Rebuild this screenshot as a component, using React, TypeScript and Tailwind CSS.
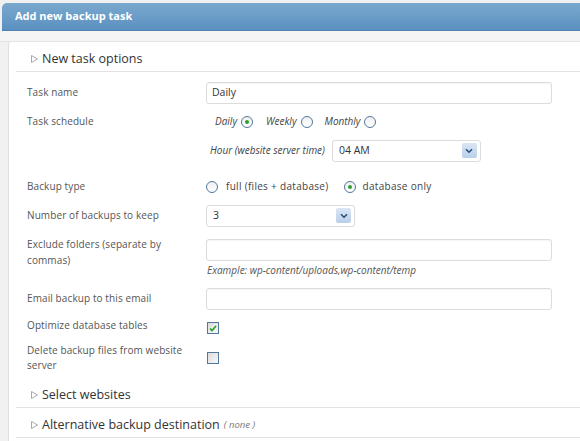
import type { ReactNode } from 'react';

const font = { fontFamily: '"Open Sans", "DejaVu Sans", sans-serif' };

function Triangle() {
    return (
        <svg width="7" height="8" viewBox="0 0 7 8" className="mr-[4px] shrink-0">
            <path d="M0.5 0.5 L6.5 4 L0.5 7.5 Z" fill="none" stroke="#a8a8a8" strokeWidth="1" />
        </svg>
    );
}

function Radio({ checked }: { checked?: boolean }) {
    return (
        <span className="inline-flex size-[12px] shrink-0 items-center justify-center rounded-full border border-[#52779c] bg-gradient-to-b from-[#f0f0f0] to-white">
            {checked && <span className="size-[4px] rounded-full bg-[#2ea02e]" />}
        </span>
    );
}

function Checkbox({ checked }: { checked?: boolean }) {
    return (
        <span className="inline-flex size-[12px] shrink-0 items-center justify-center border border-[#52779c] bg-gradient-to-br from-[#dcdcdc] to-[#f8f8f8]">
            {checked && (
                <svg width="8" height="7" viewBox="0 0 8 7">
                    <path d="M1 3.5 L3 5.5 L7 1" fill="none" stroke="#21a121" strokeWidth="1.6" />
                </svg>
            )}
        </span>
    );
}

function TextBox({ value, width }: { value?: string; width: string }) {
    return (
        <div
            className={`${width} flex h-[22px] items-center rounded-[3px] border border-[#dcdcdc] bg-white px-[5px] text-[10.5px] text-[#333] shadow-[inset_0_1px_1px_rgba(0,0,0,0.04)]`}
        >
            {value}
        </div>
    );
}

function SelectBox({ value, width }: { value: string; width: string }) {
    return (
        <div
            className={`${width} flex h-[22px] items-center justify-between rounded-[3px] border border-[#dcdcdc] bg-white pr-[3px] pl-[6px] text-[10.5px] text-[#333]`}
        >
            <span>{value}</span>
            <span className="flex size-[15px] items-center justify-center rounded-[2px] bg-gradient-to-b from-[#dbe6f4] to-[#b9cfe9]">
                <svg width="8" height="6" viewBox="0 0 8 6">
                    <path d="M1 1.2 L4 4.2 L7 1.2" fill="none" stroke="#2b4d7a" strokeWidth="1.6" />
                </svg>
            </span>
        </div>
    );
}

function Row({ label, height, children, top }: { label: ReactNode; height: string; children?: ReactNode; top: string }) {
    return (
        <div className={`${top} ${height} flex items-center`}>
            <div className="w-[179px] shrink-0 text-[10px] leading-[15px] tracking-[0.1px] text-[#555]">{label}</div>
            <div className="flex flex-1 items-center">{children}</div>
        </div>
    );
}

function Section({ title, extra }: { title: string; extra?: ReactNode }) {
    return (
        <div className="flex h-[30px] items-center border-b border-[#e2e2e2] pt-[5px] pl-[15px] text-[12.5px] text-[#333]">
            <Triangle />
            <span>{title}</span>
            {extra}
        </div>
    );
}

export default function App() {
    return (
        <div className="h-[441px] w-[580px] overflow-hidden bg-[#f1f1f1]" style={font}>
            <div className="ml-[2px] mt-[3px] flex h-[28px] items-center rounded-tl-[5px] border-b border-[#4f83b3] bg-gradient-to-b from-[#79a8ce] via-[#6b9dc7] to-[#5a8fc0] pl-[13px] text-[11px] font-bold text-white">
                Add new backup task
            </div>
            <div className="h-[11px] border-b border-[#e4e4e4] bg-[#f5f5f5]" />
            <div className="ml-[8px] h-full rounded-tl-[3px] border-l border-[#e0e0e0] bg-white pl-[7px]">
                <Section title="New task options" />
                <div className="pl-[11px]">
                    <Row top="mt-[9px]" height="h-[23px]" label="Task name">
                        <TextBox value="Daily" width="w-[346px]" />
                    </Row>
                    <Row top="mt-[6px]" height="h-[23px]" label="Task schedule">
                        <div className="flex items-center pl-[9px] text-[10px] italic text-[#444]">
                            <span className="mr-[4px]">Daily</span>
                            <Radio checked />
                            <span className="mr-[4px] ml-[13px]">Weekly</span>
                            <Radio />
                            <span className="mr-[4px] ml-[12px]">Monthly</span>
                            <Radio />
                        </div>
                    </Row>
                    <Row top="mt-[6px]" height="h-[23px]" label="">
                        <span className="mr-[7px] pl-[4px] text-[10px] italic text-[#444]">Hour (website server time)</span>
                        <SelectBox value="04 AM" width="w-[149px]" />
                    </Row>
                    <Row top="mt-[13px]" height="h-[23px]" label="Backup type">
                        <div className="flex items-center text-[10px] tracking-[0.3px] text-[#444]">
                            <Radio />
                            <span className="ml-[8px] mr-[15px]">full (files + database)</span>
                            <Radio checked />
                            <span className="ml-[7px]">database only</span>
                        </div>
                    </Row>
                    <Row top="mt-[6px]" height="h-[23px]" label="Number of backups to keep">
                        <SelectBox value="3" width="w-[149px]" />
                    </Row>
                    <div className="mt-[9px] flex">
                        <div className="w-[179px] shrink-0 text-[10px] leading-[16px] tracking-[0.1px] text-[#555]">
                            Exclude folders (separate by
                            <br />
                            commas)
                        </div>
                        <div className="flex flex-col pt-[3px]">
                            <TextBox width="w-[346px]" />
                            <span className="mt-[2px] pl-[1px] text-[10px] italic text-[#555]">
                                Example: wp-content/uploads,wp-content/temp
                            </span>
                        </div>
                    </div>
                    <Row top="mt-[9px]" height="h-[23px]" label="Email backup to this email">
                        <TextBox width="w-[346px]" />
                    </Row>
                    <Row top="mt-[4px]" height="h-[23px]" label="Optimize database tables">
                        <span className="pl-[1px]">
                            <Checkbox checked />
                        </span>
                    </Row>
                    <Row
                        top="mt-[5px]"
                        height="h-[32px]"
                        label={
                            <>
                                Delete backup files from website
                                <br />
                                server
                            </>
                        }
                    >
                        <span className="pl-[1px]">
                            <Checkbox />
                        </span>
                    </Row>
                </div>
                <div className="mt-[4px]">
                    <Section title="Select websites" />
                    <Section
                        title="Alternative backup destination"
                        extra={<span className="ml-[4px] text-[9.5px] italic text-[#777]">( none )</span>}
                    />
                </div>
            </div>
        </div>
    );
}
